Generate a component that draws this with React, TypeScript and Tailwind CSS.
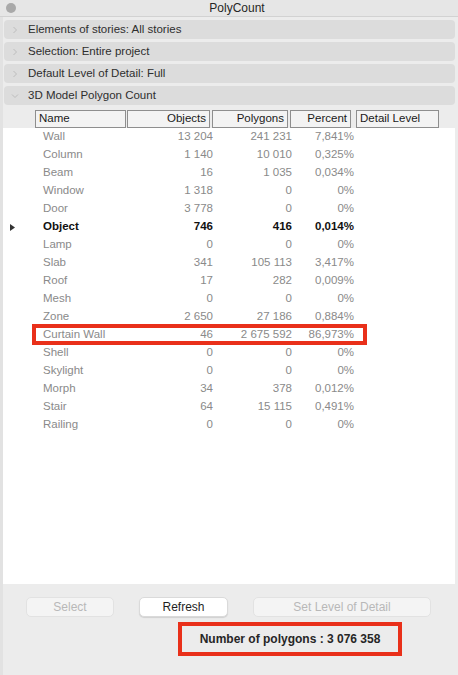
const rows = [
  { name: "Wall", objects: "13 204", polygons: "241 231", percent: "7,841%" },
  { name: "Column", objects: "1 140", polygons: "10 010", percent: "0,325%" },
  { name: "Beam", objects: "16", polygons: "1 035", percent: "0,034%" },
  { name: "Window", objects: "1 318", polygons: "0", percent: "0%" },
  { name: "Door", objects: "3 778", polygons: "0", percent: "0%" },
  { name: "Object", objects: "746", polygons: "416", percent: "0,014%", active: true },
  { name: "Lamp", objects: "0", polygons: "0", percent: "0%" },
  { name: "Slab", objects: "341", polygons: "105 113", percent: "3,417%" },
  { name: "Roof", objects: "17", polygons: "282", percent: "0,009%" },
  { name: "Mesh", objects: "0", polygons: "0", percent: "0%" },
  { name: "Zone", objects: "2 650", polygons: "27 186", percent: "0,884%" },
  { name: "Curtain Wall", objects: "46", polygons: "2 675 592", percent: "86,973%", marked: true },
  { name: "Shell", objects: "0", polygons: "0", percent: "0%" },
  { name: "Skylight", objects: "0", polygons: "0", percent: "0%" },
  { name: "Morph", objects: "34", polygons: "378", percent: "0,012%" },
  { name: "Stair", objects: "64", polygons: "15 115", percent: "0,491%" },
  { name: "Railing", objects: "0", polygons: "0", percent: "0%" },
];

const sections = [
  { label: "Elements of stories: All stories", open: false },
  { label: "Selection: Entire project", open: false },
  { label: "Default Level of Detail: Full", open: false },
  { label: "3D Model Polygon Count", open: true },
];

const Chevron = ({ open }: { open: boolean }) => (
  <svg width="8" height="8" viewBox="0 0 8 8" className="shrink-0">
    {open ? (
      <path d="M1 2.5 L4 5.5 L7 2.5" fill="none" stroke="#bdbdbd" strokeWidth="1" />
    ) : (
      <path d="M2.5 1 L5.5 4 L2.5 7" fill="none" stroke="#bdbdbd" strokeWidth="1" />
    )}
  </svg>
);

const App = () => {
  return (
    <div
      className="w-[458px] h-[675px] bg-[#ececec] flex flex-col overflow-hidden text-[11.5px]"
      style={{ fontFamily: '"Liberation Sans", Arial, sans-serif' }}
    >
      {/* title bar */}
      <div className="h-[17px] flex items-center bg-[#e6e6e6] border-b border-[#d2d2d2] shrink-0">
        <div className="w-[22px] flex justify-center">
          <div className="w-[10px] h-[10px] rounded-full bg-[#a9a9a9]" />
        </div>
        <div className="flex-1 text-center text-[12px] text-[#262626] pl-[16px]">PolyCount</div>
        <div className="w-[22px]" />
      </div>

      <div className="flex flex-col flex-1 border-l-[3px] border-[#e2e2e2]">
        {/* collapsible sections */}
        <div className="flex flex-col gap-[3px] pt-[3px] pl-[1px] pr-[3px]">
          {sections.map((s) => (
            <div
              key={s.label}
              className="h-[19px] rounded-[4px] bg-[#dcdcdc] flex items-center gap-[9px] pl-[7px] text-[#2e2e2e]"
            >
              <Chevron open={s.open} />
              <span>{s.label}</span>
            </div>
          ))}
        </div>

        {/* list view */}
        <div className="mt-[2px] mr-[3px] flex flex-col flex-1 bg-white">
          <div className="h-[21px] bg-[#ececec] flex items-end pl-[32px] text-[#1a1a1a]">
            <div className="w-[91px] h-[18px] border border-[#8e8e8e] bg-[#f3f3f3] px-[3px] flex items-center">Name</div>
            <div className="ml-[1px] w-[83px] h-[18px] border border-[#8e8e8e] bg-[#f3f3f3] px-[3px] flex items-center justify-end">Objects</div>
            <div className="ml-[2px] w-[76px] h-[18px] border border-[#8e8e8e] bg-[#f3f3f3] px-[3px] flex items-center justify-end">Polygons</div>
            <div className="ml-[2px] w-[61px] h-[18px] border border-[#8e8e8e] bg-[#f3f3f3] px-[3px] flex items-center justify-end">Percent</div>
            <div className="ml-[5px] w-[83px] h-[18px] border border-[#8e8e8e] bg-[#f3f3f3] px-[3px] flex items-center">Detail Level</div>
          </div>

          <div className="flex flex-col">
            {rows.map((r) => (
              <div
                key={r.name}
                className={`relative h-[18px] flex items-center ${r.active ? "text-[#111] font-bold" : "text-[#8a8a8a]"}`}
              >
                <div className="w-[40px] flex items-center pl-[7px]">
                  {r.active && (
                    <svg width="5" height="7" viewBox="0 0 5 7">
                      <path d="M0 0 L5 3.5 L0 7 Z" fill="#333" />
                    </svg>
                  )}
                </div>
                <div className="w-[120px]">{r.name}</div>
                <div className="w-[50px] text-right">{r.objects}</div>
                <div className="w-[79px] text-right">{r.polygons}</div>
                <div className="w-[62px] text-right">{r.percent}</div>
                {r.marked && (
                  <span className="absolute left-[29px] top-[-2px] w-[335px] h-[21px] border-[4px] border-[#e9301a]" />
                )}
              </div>
            ))}
          </div>
        </div>

        {/* footer */}
        <div className="h-[91px] shrink-0 flex flex-col pt-[13px]">
          <div className="flex gap-[25px] pl-[23px] text-[12px]">
            <button className="w-[88px] h-[20px] rounded-[5px] bg-[#f4f4f4] border border-[#e2e2e2] text-[#b8b8b8]">Select</button>
            <button className="w-[89px] h-[20px] rounded-[5px] bg-white border border-[#dadada] shadow-[0_1px_1px_rgba(0,0,0,0.12)] text-[#1f1f1f]">Refresh</button>
            <button className="w-[178px] h-[20px] rounded-[5px] bg-[#f4f4f4] border border-[#e2e2e2] text-[#b8b8b8]">Set Level of Detail</button>
          </div>
          <div className="mt-[5px] ml-[175px] w-[224px] h-[34px] border-[4px] border-[#e9301a] flex items-center justify-center font-bold text-[12px] text-[#262626]">
            Number of polygons : 3 076 358
          </div>
        </div>
      </div>
    </div>
  );
};

export default App;
